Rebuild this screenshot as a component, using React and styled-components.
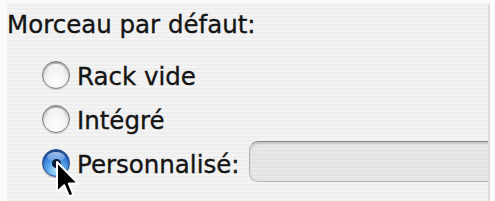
import React from "react";
import styled, { createGlobalStyle } from "styled-components";

const Global = createGlobalStyle`
  html, body { margin: 0; padding: 0; background: #fbfbfb; }
  body { width: 495px; height: 201px; overflow: hidden; }
`;

const Page = styled.div`
  position: relative;
  width: 495px;
  height: 201px;
  padding: 3px 5px 0 7px;
  box-sizing: border-box;
`;

const Panel = styled.div`
  position: relative;
  height: 198px;
  box-sizing: border-box;
  border-top: 1px solid #f6f6f6;
  border-right: 2px solid #dcdcdc;
  background: repeating-linear-gradient(
    to bottom,
    #eeeeee 0px,
    #eeeeee 2px,
    #f3f3f3 2px,
    #f3f3f3 4px
  );
  overflow: hidden;
  padding-top: 5.5px;
  font-family: "DejaVu Sans", "Liberation Sans", sans-serif;
  color: #141414;
  font-size: 24.5px;
  -webkit-text-stroke: 0.35px #141414;
`;

const Heading = styled.div`
  line-height: 30px;
  height: 30px;
  white-space: nowrap;
`;

const Options = styled.div`
  display: flex;
  flex-direction: column;
  margin-top: 15px;
  padding-left: 35px;
`;

const Row = styled.div`
  display: flex;
  align-items: center;
  height: 44px;
  gap: 7px;
  white-space: nowrap;
`;

const Radio = styled.span`
  flex: none;
  width: 28px;
  height: 28px;
  border-radius: 50%;
  box-sizing: border-box;
  margin-top: -3px;
  position: relative;
  border: 1px solid ${(p) => (p.$checked ? "#2c4f86" : "#7d7d7d")};
  background: ${(p) =>
    p.$checked
      ? "radial-gradient(circle at 50% 78%, #b6e3ff 0%, #5aa6ec 35%, #2b6fcf 70%, #1c4e9c 100%)"
      : "radial-gradient(circle at 50% 75%, #ffffff 0%, #f4f4f4 40%, #dedede 75%, #bdbdbd 100%)"};
  box-shadow: ${(p) =>
    p.$checked
      ? "inset 0 2px 2px rgba(10,30,80,0.5), 0 1px 1px rgba(0,0,0,0.25)"
      : "inset 0 2px 2px rgba(0,0,0,0.25), 0 1px 1px rgba(0,0,0,0.15)"};
  &::before {
    content: "";
    position: absolute;
    left: 4px;
    right: 4px;
    top: 2px;
    height: 10px;
    border-radius: 50%;
    background: linear-gradient(rgba(255,255,255,0.85), rgba(255,255,255,0.1));
    opacity: ${(p) => (p.$checked ? 0.7 : 0.9)};
  }
  &::after {
    content: "";
    display: ${(p) => (p.$checked ? "block" : "none")};
    position: absolute;
    left: 50%;
    top: 50%;
    width: 9px;
    height: 9px;
    margin: -4.5px 0 0 -4.5px;
    border-radius: 50%;
    background: #0d1a33;
  }
`;

const Label = styled.span`
  line-height: 44px;
`;

const Field = styled.div`
  flex: none;
  width: 260px;
  height: 41px;
  margin-left: 2px;
  margin-top: -6px;
  box-sizing: border-box;
  border: 1px solid #b3b3b3;
  border-top-color: #888888;
  border-right: none;
  border-radius: 9px 0 0 9px;
  background: repeating-linear-gradient(
    to bottom,
    #e3e3e3 0px,
    #e3e3e3 2px,
    #e8e8e8 2px,
    #e8e8e8 4px
  );
  box-shadow: inset 0 2px 2px rgba(0, 0, 0, 0.14);
`;

const Cursor = styled.svg`
  position: absolute;
  left: 55px;
  top: 160px;
  width: 24px;
  height: 40px;
  overflow: visible;
`;

export default function App() {
  return (
    <>
      <Global />
      <Page>
        <Panel>
          <Heading>Morceau par défaut:</Heading>
          <Options>
            <Row>
              <Radio />
              <Label>Rack vide</Label>
            </Row>
            <Row>
              <Radio />
              <Label>Intégré</Label>
            </Row>
            <Row>
              <Radio $checked />
              <Label>Personnalisé:</Label>
              <Field />
            </Row>
          </Options>
        </Panel>
        <Cursor viewBox="0 0 12 20">
          <path
            d="M1 1 L1 16 L4.6 12.6 L7 18.2 L9.2 17.3 L6.9 11.8 L11.6 11.8 Z"
            fill="#000"
            stroke="#fff"
            strokeWidth="1"
            strokeLinejoin="round"
          />
        </Cursor>
      </Page>
    </>
  );
}
